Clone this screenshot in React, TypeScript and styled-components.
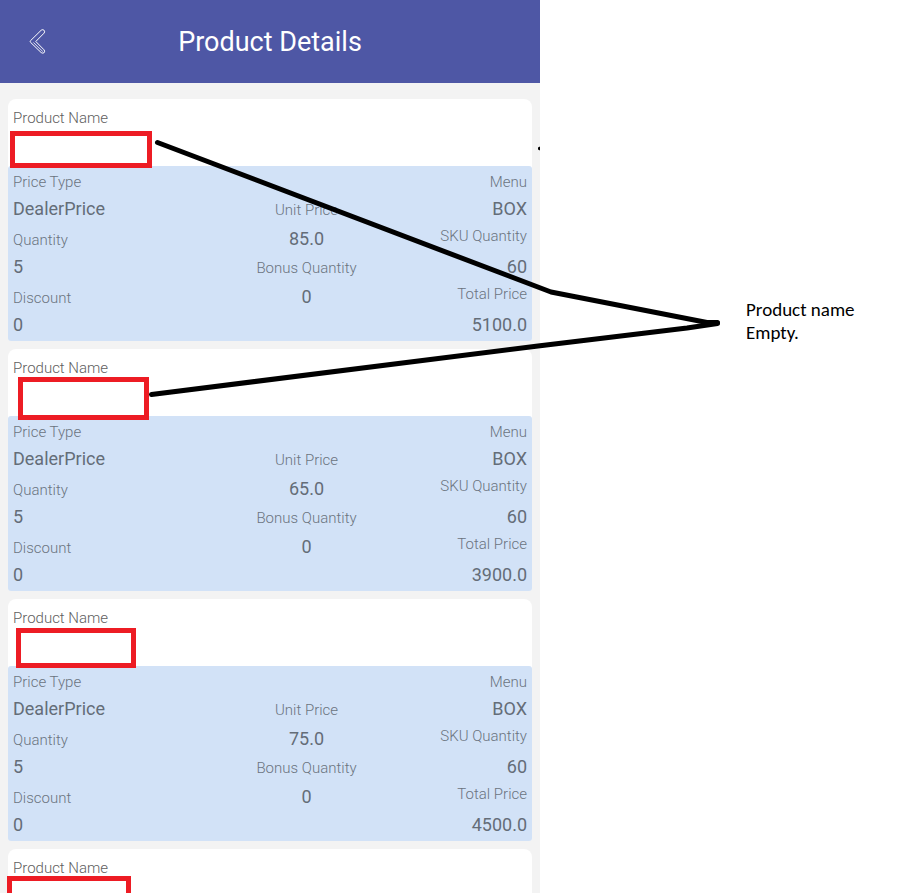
import React from "react";
import styled, { createGlobalStyle } from "styled-components";

const GlobalStyle = createGlobalStyle`
  *, *::before, *::after { box-sizing: border-box; }
  body { margin: 0; background: #ffffff; }
`;

const Board = styled.div`
  position: relative;
  display: grid;
  grid-template-columns: 540fr 381fr;
  height: 100vh;
  overflow: hidden;
`;

const Screen = styled.main`
  min-width: 0;
  min-height: 0;
  overflow: hidden;
  background: #f3f3f3;
  font-family: Roboto, "Liberation Sans", sans-serif;
`;

const AppBar = styled.header`
  display: grid;
  grid-template-columns: 76px 1fr 76px;
  align-items: center;
  height: 83px;
  background: #4e57a5;
  color: #ffffff;
`;

const BackButton = styled.button`
  display: flex;
  align-items: center;
  justify-content: center;
  height: 48px;
  padding: 0;
  border: 0;
  background: none;
  color: inherit;
  cursor: pointer;
`;

const Title = styled.h1`
  margin: 0;
  font-size: 27px;
  font-weight: 400;
  line-height: 32px;
  text-align: center;
`;

const CardList = styled.div`
  display: flex;
  flex-direction: column;
  gap: 8px;
  padding: 16px 8px;
`;

const Card = styled.article`
  position: relative;
  border-radius: 8px 8px 4px 4px;
  background: #ffffff;
`;

const NameRow = styled.div`
  height: 67px;
  padding: 7px 5px 0;
`;

const Details = styled.div`
  display: grid;
  grid-template-columns: 234fr 119fr 161fr;
  padding: 4px 5px 1px;
  border-radius: 3px;
  background: #d2e2f7;
`;

const Column = styled.dl<{ $align: "left" | "center" | "right" }>`
  display: flex;
  flex-direction: column;
  gap: ${({ $align }) => ({ left: 4, center: 2, right: 0 })[$align]}px;
  margin: 0;
  padding-top: ${({ $align }) => ($align === "center" ? 28 : 0)}px;
  text-align: ${({ $align }) => $align};
`;

const Field = styled.div<{ $gap?: number }>`
  display: flex;
  flex-direction: column;
  gap: ${({ $gap = 0 }) => $gap}px;
`;

const Label = styled.dt<{ $muted?: boolean }>`
  font-size: 15px;
  font-weight: 300;
  line-height: 24px;
  white-space: nowrap;
  color: ${({ $muted }) => ($muted ? "#6b747f" : "#606060")};
`;

const Value = styled.dd`
  margin: 0;
  font-size: 18px;
  font-weight: 400;
  line-height: 30px;
  color: #646d78;
`;

const Highlight = styled.span<{ $box: [number, number, number, number] }>`
  position: absolute;
  left: ${({ $box }) => $box[0]}px;
  top: ${({ $box }) => $box[1]}px;
  width: ${({ $box }) => $box[2]}px;
  height: ${({ $box }) => $box[3]}px;
  border: 5px solid #ed1c24;
  background: #ffffff;
`;

const Margin = styled.aside`
  padding: 298px 16px 0 206px;
`;

const Note = styled.p`
  margin: 0;
  font-family: Carlito, Lato, sans-serif;
  font-size: 19px;
  line-height: 23px;
  white-space: nowrap;
  color: #000000;
`;

const Strokes = styled.svg`
  position: absolute;
  top: 0;
  left: 0;
  width: 100%;
  height: 893px;
  pointer-events: none;
`;

type Product = {
  price?: string;
  total?: string;
  box: [number, number, number, number];
};

const products: Product[] = [
  { price: "85.0", total: "5100.0", box: [2, 32, 142, 37] },
  { price: "65.0", total: "3900.0", box: [10, 28, 131, 43] },
  { price: "75.0", total: "4500.0", box: [8, 29, 120, 40] },
  { box: [-1, 27, 124, 40] },
];

type ItemProps = { label: string; value: string; gap?: number };

function Item({ label, value, gap }: ItemProps) {
  return (
    <Field $gap={gap}>
      <Label $muted>{label}</Label>
      <Value>{value}</Value>
    </Field>
  );
}

function ProductCard({ price, total, box }: Product) {
  return (
    <Card>
      <NameRow>
        <Label as="div">Product Name</Label>
      </NameRow>
      {price && total && (
        <Details>
          <Column $align="left">
            <Item label="Price Type" value="DealerPrice" />
            <Item label="Quantity" value="5" />
            <Item label="Discount" value="0" />
          </Column>
          <Column $align="center">
            <Item label="Unit Price" value={price} gap={2} />
            <Item label="Bonus Quantity" value="0" gap={2} />
          </Column>
          <Column $align="right">
            <Item label="Menu" value="BOX" />
            <Item label="SKU Quantity" value="60" gap={4} />
            <Item label="Total Price" value={total} gap={4} />
          </Column>
        </Details>
      )}
      <Highlight $box={box} />
    </Card>
  );
}

export default function App() {
  return (
    <>
      <GlobalStyle />
      <Board>
        <Screen>
          <AppBar>
            <BackButton type="button" aria-label="Back">
              <svg width="18" height="28" viewBox="0 0 18 28" fill="none" stroke="currentColor" strokeLinejoin="round">
                <path d="M1.500 12.700 12.200 2.200Q13.800 1 15.200 2.400 16.200 3.800 15 5.200L6.800 13.500 15 21.800Q16.200 23.200 15.200 24.600 13.800 25.800 12.200 24.600L1.500 14.300Q.8 13.500 1.500 12.700Z" />
                <path d="M4.500 14.500 13.800 23.500" strokeWidth="0.8" />
              </svg>
            </BackButton>
            <Title>Product Details</Title>
          </AppBar>
          <CardList>
            {products.map((product, index) => (
              <ProductCard key={index} {...product} />
            ))}
          </CardList>
        </Screen>
        <Margin>
          <Note>
            Product name
            <br />
            Empty.
          </Note>
        </Margin>
        <Strokes viewBox="0 0 921 893" preserveAspectRatio="none" aria-hidden="true">
          <g fill="none" stroke="#000000" strokeWidth="5" strokeLinecap="round" strokeLinejoin="round">
            <path d="M157.500 142.500 551 292 707 322.500 717.500 322.500" />
            <path d="M151.500 394.500 538 346 687 328 717.500 323.500" />
          </g>
          <path d="M540 146.500V150.500L538 149.500V147.500Z" fill="#000000" />
        </Strokes>
      </Board>
    </>
  );
}
